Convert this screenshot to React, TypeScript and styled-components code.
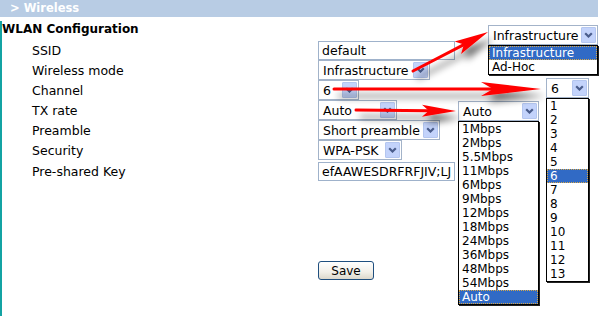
import React from "react";
import styled, { createGlobalStyle } from "styled-components";

const GlobalStyle = createGlobalStyle`
  body {
    margin: 0;
    background: #fff;
    font-family: "DejaVu Sans", Verdana, sans-serif;
    font-size: 12.5px;
    color: #000;
  }
`;

const rows = [
  { label: "SSID", kind: "input", value: "default", width: 137 },
  { label: "Wireless mode", kind: "select", value: "Infrastructure", width: 112 },
  { label: "Channel", kind: "select", value: "6", width: 41 },
  { label: "TX rate", kind: "select", value: "Auto", width: 79 },
  { label: "Preamble", kind: "select", value: "Short preamble", width: 122 },
  { label: "Security", kind: "select", value: "WPA-PSK", width: 84 },
  { label: "Pre-shared Key", kind: "input", value: "efAAWESDRFRFJIV;LJIKHGF", width: 137 },
];

const channels = ["1", "2", "3", "4", "5", "6", "7", "8", "9", "10", "11", "12", "13"];
const rates = [
  "1Mbps", "2Mbps", "5.5Mbps", "11Mbps", "6Mbps", "9Mbps", "12Mbps",
  "18Mbps", "24Mbps", "36Mbps", "48Mbps", "54Mbps", "Auto",
];

const Chevron = () => (
  <svg width="9" height="6" viewBox="0 0 9 6">
    <path d="M1.2 1.2 L4.5 4.5 L7.8 1.2" fill="none" stroke="#4a5d8c" strokeWidth="2.2" />
  </svg>
);

const Select = ({ value, width }: { value: string; width: number }) => (
  <SelectBox $w={width}>
    <SelectValue>{value}</SelectValue>
    <DropButton>
      <Chevron />
    </DropButton>
  </SelectBox>
);

const Popup = ({
  left,
  top,
  width,
  value,
  options,
}: {
  left: number;
  top: number;
  width: number;
  value: string;
  options: string[];
}) => (
  <PopupWrap style={{ left, top, width }}>
    <Select value={value} width={width} />
    <OptionList>
      {options.map((o) => (
        <Option key={o} $active={o === value}>
          {o}
        </Option>
      ))}
    </OptionList>
  </PopupWrap>
);

// arrow: line plus a notched head, tip at (x2, y2)
const Arrow = ({
  x1, y1, x2, y2, len, half,
}: { x1: number; y1: number; x2: number; y2: number; len: number; half: number }) => {
  const dx = x2 - x1;
  const dy = y2 - y1;
  const L = Math.hypot(dx, dy);
  const ux = dx / L;
  const uy = dy / L;
  const nx = -uy;
  const ny = ux;
  const bx = x2 - ux * len;
  const by = y2 - uy * len;
  const kx = x2 - ux * len * 0.8;
  const ky = y2 - uy * len * 0.8;
  const pts = [
    [x2, y2],
    [bx + nx * half, by + ny * half],
    [kx, ky],
    [bx - nx * half, by - ny * half],
  ]
    .map((p) => p.join(","))
    .join(" ");
  return (
    <g>
      <line x1={x1} y1={y1} x2={kx} y2={ky} stroke="#f00" strokeWidth="3" strokeLinecap="round" />
      <polygon points={pts} fill="#f00" />
    </g>
  );
};

export default function App() {
  return (
    <Page>
      <GlobalStyle />
      <Header>&gt; Wireless</Header>
      <Content>
        <Title>WLAN Configuration</Title>
        <Form>
          {rows.map((r) => (
            <React.Fragment key={r.label}>
              <Label>{r.label}</Label>
              <Cell>
                {r.kind === "input" ? (
                  <TextBox $w={r.width} value={r.value} readOnly />
                ) : (
                  <Select value={r.value} width={r.width} />
                )}
              </Cell>
            </React.Fragment>
          ))}
        </Form>
        <SaveRow>
          <SaveButton>Save</SaveButton>
        </SaveRow>
      </Content>

      <Popup left={488} top={25} width={110} value="Infrastructure" options={["Infrastructure", "Ad-Hoc"]} />
      <Popup left={546} top={78} width={43} value="6" options={channels} />
      <Popup left={458} top={101} width={81} value="Auto" options={rates} />

      <Overlay width="600" height="316" viewBox="0 0 600 316">
        <defs>
          <filter id="shadow" x="-20%" y="-100%" width="150%" height="400%">
            <feGaussianBlur in="SourceAlpha" stdDeviation="3.5" />
            <feOffset dx="5" dy="7" result="b" />
            <feComponentTransfer>
              <feFuncA type="linear" slope="0.55" />
            </feComponentTransfer>
            <feMerge>
              <feMergeNode />
              <feMergeNode in="SourceGraphic" />
            </feMerge>
          </filter>
        </defs>
        <g filter="url(#shadow)">
          <Arrow x1={413} y1={71} x2={488} y2={32} len={34} half={7} />
          <Arrow x1={334} y1={89} x2={541} y2={89} len={60} half={7} />
          <Arrow x1={356} y1={110} x2={456} y2={111} len={34} half={6} />
        </g>
      </Overlay>
    </Page>
  );
}

const Page = styled.div`
  position: relative;
  width: 600px;
  height: 316px;
  overflow: hidden;
`;

const Header = styled.div`
  width: 588px;
  height: 17px;
  padding-left: 10px;
  background: #b8cce4;
  color: #fff;
  font-size: 11.5px;
  font-weight: bold;
  line-height: 17px;
`;

const Content = styled.div`
  border-left: 2px solid #13a3a3;
  height: 299px;
`;

const Title = styled.div`
  font-size: 12px;
  font-weight: bold;
  line-height: 16px;
  margin: 4px 0 3px;
`;

const Form = styled.div`
  display: grid;
  grid-template-columns: 286px auto;
  grid-template-rows: repeat(6, 20px) 22px;
  align-items: center;
  padding-left: 30px;
`;

const Label = styled.div`
  white-space: nowrap;
`;

const Cell = styled.div`
  display: flex;
  align-items: center;
`;

const TextBox = styled.input<{ $w: number }>`
  box-sizing: border-box;
  width: ${(p) => p.$w}px;
  height: 19px;
  border: 1px solid #9fb2cb;
  padding: 0 3px;
  font: inherit;
  color: #000;
  outline: none;
`;

const SelectBox = styled.div<{ $w: number }>`
  box-sizing: border-box;
  display: flex;
  align-items: center;
  width: ${(p) => p.$w}px;
  height: 20px;
  padding: 1px 1px 1px 0;
  border: 1px solid #a3b3c9;
  background: #fff;
`;

const SelectValue = styled.span`
  flex: 1;
  padding-left: 4px;
  white-space: nowrap;
  overflow: hidden;
`;

const DropButton = styled.span`
  box-sizing: border-box;
  display: flex;
  align-items: center;
  justify-content: center;
  width: 15px;
  height: 16px;
  flex: none;
  background: #c3d3fb;
  border: 1px solid #b4c6ef;
  border-radius: 1px;
`;

const SaveRow = styled.div`
  padding: 79px 0 0 316px;
`;

const SaveButton = styled.button`
  box-sizing: border-box;
  width: 56px;
  height: 19px;
  padding: 0;
  border: 1px solid #1f4f7f;
  border-radius: 3px;
  background: linear-gradient(#ffffff, #f1efe8 60%, #dcd8cc);
  font: inherit;
  font-size: 12px;
  color: #000;
`;

const PopupWrap = styled.div`
  position: absolute;
  background: #fff;
`;

const OptionList = styled.div`
  border: 1px solid #000;
  box-shadow: 1px 1px 0 #222;
  background: #fff;
  font-size: 12px;
`;

const Option = styled.div<{ $active?: boolean }>`
  height: 14px;
  line-height: 14px;
  padding-left: 3px;
  white-space: nowrap;
  background: ${(p) => (p.$active ? "#316ac5" : "#fff")};
  color: ${(p) => (p.$active ? "#fff" : "#000")};
  outline: ${(p) => (p.$active ? "1px dotted #d8a848" : "none")};
  outline-offset: -1px;
`;

const Overlay = styled.svg`
  position: absolute;
  left: 0;
  top: 0;
  pointer-events: none;
`;
